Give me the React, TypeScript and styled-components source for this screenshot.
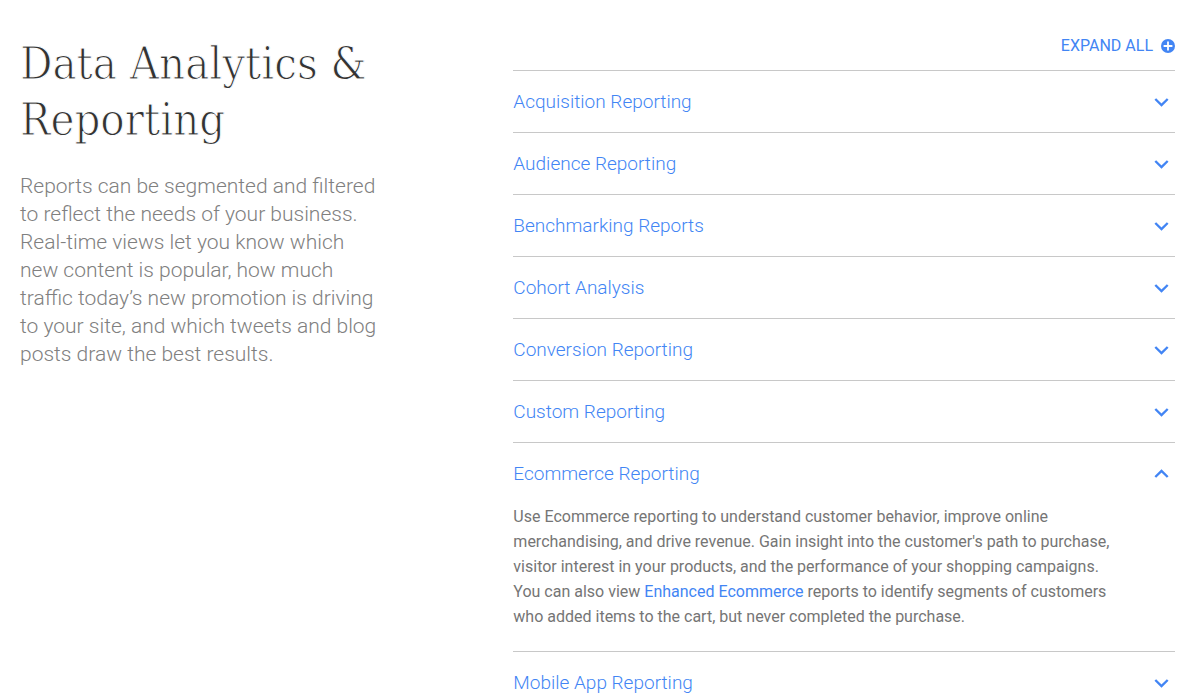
import React, { useState } from "react";
import styled, { createGlobalStyle } from "styled-components";

const GlobalStyle = createGlobalStyle`
  * { box-sizing: border-box; }
  body {
    margin: 0;
    background: #fff;
    font-family: Roboto, "Liberation Sans", sans-serif;
    overflow-x: hidden;
  }
  html { scrollbar-width: none; }
`;

const Page = styled.main`
  display: grid;
  grid-template-columns: 369fr 661fr;
  column-gap: 124px;
  padding: 34px 25px 0 20px;
`;

const Intro = styled.section`
  min-width: 0;
  padding-top: 2px;
`;

const Heading = styled.h1`
  margin: 0 0 24px;
  color: #333;
  font-family: "Roboto Slab", "DejaVu Serif Condensed", "DejaVu Serif", serif;
  font-weight: 300;
  font-size: 45px;
  line-height: 56px;
  -webkit-text-stroke: 1px #fff;
`;

const Lead = styled.p`
  margin: 0;
  max-width: 364px;
  color: #808080;
  font-weight: 300;
  font-size: 21px;
  line-height: 28px;
`;

const Topics = styled.section`
  min-width: 0;
`;

const Toolbar = styled.div`
  display: flex;
  justify-content: flex-end;
  height: 36px;
`;

const ExpandButton = styled.button`
  display: flex;
  align-items: center;
  gap: 8px;
  height: 24px;
  padding: 0;
  border: 0;
  background: none;
  color: #4285f4;
  font: 400 16px/24px Roboto, sans-serif;
  cursor: pointer;
`;

const List = styled.ul`
  margin: 0;
  padding: 0;
  list-style: none;
`;

const Item = styled.li`
  border-top: 1px solid #c8c8c8;
`;

const ItemHeading = styled.h2`
  margin: 0;
`;

const ItemButton = styled.button`
  display: flex;
  align-items: center;
  justify-content: space-between;
  width: 100%;
  height: 61px;
  padding: 0 6px 0 0;
  border: 0;
  background: none;
  color: #4285f4;
  font: 300 19px/28px Roboto, sans-serif;
  text-align: left;
  cursor: pointer;
`;

const Chevron = styled.svg<{ $open: boolean }>`
  transform: ${(p) => (p.$open ? "rotate(180deg)" : "none")};
`;

const Detail = styled.p`
  margin: 0;
  padding: 0 48px 22px 0;
  color: #757575;
  font-size: 16px;
  line-height: 25px;
`;

const TextLink = styled.a`
  color: #4285f4;
  text-decoration: none;
`;

const topics: { title: string; body?: React.ReactNode }[] = [
  { title: "Acquisition Reporting" },
  { title: "Audience Reporting" },
  { title: "Benchmarking Reports" },
  { title: "Cohort Analysis" },
  { title: "Conversion Reporting" },
  { title: "Custom Reporting" },
  {
    title: "Ecommerce Reporting",
    body: (
      <>
        Use Ecommerce reporting to understand customer behavior, improve online
        merchandising, and drive revenue. Gain insight into the customer's path
        to purchase, visitor interest in your products, and the performance of
        your shopping campaigns. You can also view{" "}
        <TextLink href="#enhanced-ecommerce">Enhanced Ecommerce</TextLink>{" "}
        reports to identify segments of customers who added items to the cart,
        but never completed the purchase.
      </>
    ),
  },
  { title: "Mobile App Reporting" },
];

export default function App() {
  const [open, setOpen] = useState<string[]>(["Ecommerce Reporting"]);
  const toggle = (title: string) =>
    setOpen((o) =>
      o.includes(title) ? o.filter((t) => t !== title) : [...o, title]
    );

  return (
    <>
      <GlobalStyle />
      <Page>
        <Intro>
          <Heading>Data Analytics &amp; Reporting</Heading>
          <Lead>
            Reports can be segmented and filtered to reflect the needs of your
            business. Real-time views let you know which new content is popular,
            how much traffic today’s new promotion is driving to your site, and
            which tweets and blog posts draw the best results.
          </Lead>
        </Intro>
        <Topics>
          <Toolbar>
            <ExpandButton
              type="button"
              onClick={() => setOpen(topics.map((t) => t.title))}
            >
              EXPAND ALL
              <svg width="14" height="14" viewBox="0 0 14 14" aria-hidden="true">
                <circle cx="7" cy="7" r="7" fill="#4285f4" />
                <path d="M7 2.6v8.8M2.6 7h8.8" stroke="#fff" strokeWidth="1.8" />
              </svg>
            </ExpandButton>
          </Toolbar>
          <List>
            {topics.map(({ title, body }) => {
              const isOpen = open.includes(title);
              return (
                <Item key={title}>
                  <ItemHeading>
                    <ItemButton
                      type="button"
                      aria-expanded={isOpen}
                      onClick={() => toggle(title)}
                    >
                      {title}
                      <Chevron
                        $open={isOpen}
                        width="15"
                        height="10"
                        viewBox="0 0 15 10"
                        fill="none"
                        stroke="#4285f4"
                        strokeWidth="2.4"
                        aria-hidden="true"
                      >
                        <path d="M1.3 2 7.5 8 13.7 2" />
                      </Chevron>
                    </ItemButton>
                  </ItemHeading>
                  {isOpen && body && <Detail>{body}</Detail>}
                </Item>
              );
            })}
          </List>
        </Topics>
      </Page>
    </>
  );
}
